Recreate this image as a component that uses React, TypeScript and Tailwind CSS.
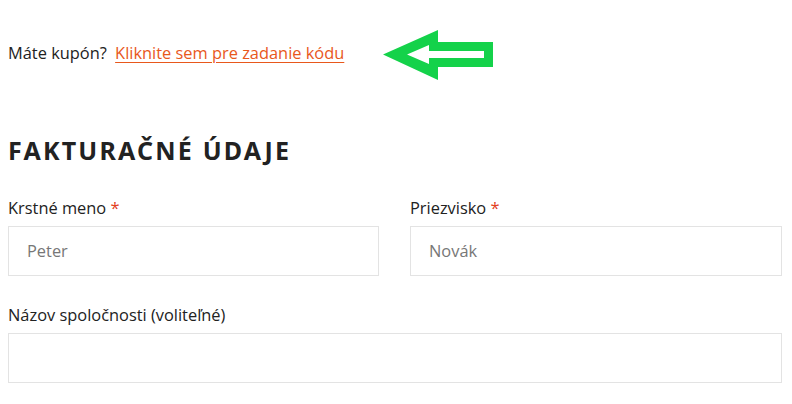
import React from "react";

export default function App() {
  return (
    <div className="w-[792px] h-[404px] bg-white overflow-hidden pl-[8px] pr-[10px]" style={{ fontFamily: '"Open Sans", "Noto Sans", sans-serif' }}>
      <div className="relative h-[134px] pt-[41px]">
        <p className="text-[16.4px] leading-[24px] text-[#222]">
          Máte kupón?{" "}
          <a href="#" className="ml-[4px] text-[#e8581c] underline underline-offset-[3px]">
            Kliknite sem pre zadanie kódu
          </a>
        </p>
        <svg className="absolute left-[367px] top-[30px]" width="120" height="52" viewBox="375 30 120 52">
          <path
            fillRule="evenodd"
            fill="#14d24a"
            d="M383 54.5 L438 30 L438 42 L493 42 L493 67 L438 67 L438 80 Z M407 54.5 L429 45 L429 51 L484 51 L484 58 L429 58 L429 64 Z"
          />
        </svg>
      </div>
      <h2 className="text-[25px] leading-[32px] font-bold tracking-[2.2px] text-[#222]" style={{ fontFamily: '"Noto Sans", sans-serif' }}>
        FAKTURAČNÉ ÚDAJE
      </h2>
      <div className="mt-[31px] grid grid-cols-[371px_372px] gap-x-[31px]">
        <div>
          <label className="block text-[16.4px] leading-[22px] text-[#222]">
            Krstné meno <span className="text-[#e2401c]">*</span>
          </label>
          <div className="mt-[7px] h-[50px] border border-[#e3e3e3] flex items-center px-[18px] text-[16.4px] text-[#777]">Peter</div>
        </div>
        <div>
          <label className="block text-[16.4px] leading-[22px] text-[#222]">
            Priezvisko <span className="text-[#e2401c]">*</span>
          </label>
          <div className="mt-[7px] h-[50px] border border-[#e3e3e3] flex items-center px-[18px] text-[16.4px] text-[#777]">Novák</div>
        </div>
      </div>
      <div className="mt-[28px]">
        <label className="block text-[16.4px] leading-[22px] text-[#222]">Názov spoločnosti (voliteľné)</label>
        <div className="mt-[7px] h-[50px] border border-[#e3e3e3]"></div>
      </div>
    </div>
  );
}
